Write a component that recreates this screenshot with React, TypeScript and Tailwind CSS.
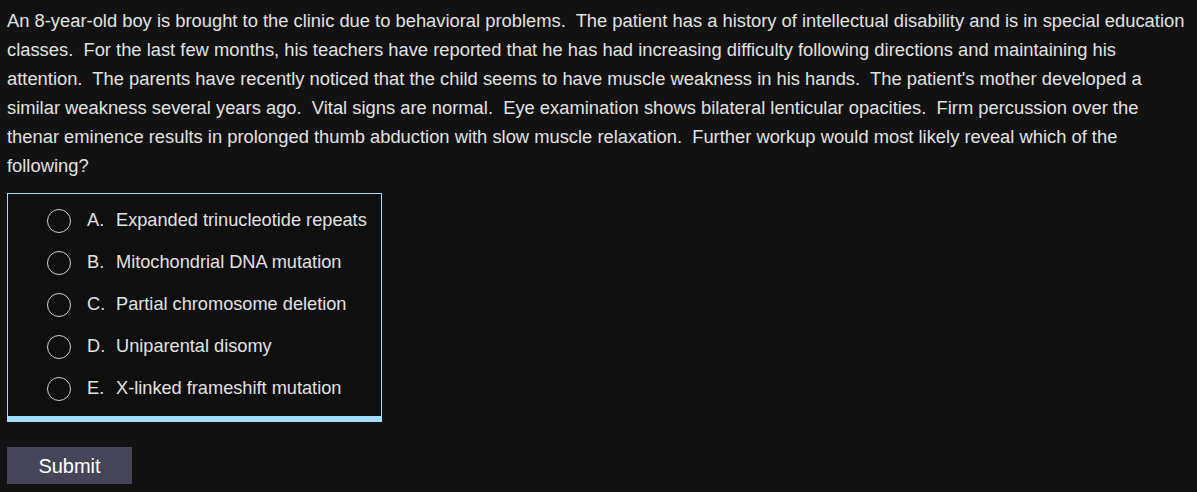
import { useState } from "react";

const options = [
  { key: "A", text: "Expanded trinucleotide repeats" },
  { key: "B", text: "Mitochondrial DNA mutation" },
  { key: "C", text: "Partial chromosome deletion" },
  { key: "D", text: "Uniparental disomy" },
  { key: "E", text: "X-linked frameshift mutation" },
];

export default function App() {
  const [selected, setSelected] = useState<string | null>(null);

  return (
    <div className="min-h-[492px] bg-[#121212] px-[7px] pt-[6px] font-['Liberation_Sans',Arial,sans-serif] text-[#e1e1e1]">
      <p className="text-[18.35px] leading-[29px]">
        An 8-year-old boy is brought to the clinic due to behavioral problems.&nbsp; The patient has a history of
        intellectual disability and is in special education classes.&nbsp; For the last few months, his teachers have
        reported that he has had increasing difficulty following directions and maintaining his attention.&nbsp; The
        parents have recently noticed that the child seems to have muscle weakness in his hands.&nbsp; The patient's
        mother developed a similar weakness several years ago.&nbsp; Vital signs are normal.&nbsp; Eye examination shows
        bilateral lenticular opacities.&nbsp; Firm percussion over the thenar eminence results in prolonged thumb
        abduction with slow muscle relaxation.&nbsp; Further workup would most likely reveal which of the following?
      </p>

      <div className="mt-[13px] w-[375px] border border-b-0 border-[#a6d8f2] bg-[#0f0f0f]">
        <div className="py-[6px]">
          {options.map((o) => (
            <label
              key={o.key}
              onClick={() => setSelected(o.key)}
              className="flex h-[42px] cursor-pointer items-center pl-[39px] text-[18.2px]"
            >
              <span className="flex h-[24px] w-[24px] shrink-0 items-center justify-center rounded-full border-[1.5px] border-[#d0d0d0]">
                {selected === o.key && <span className="h-[12px] w-[12px] rounded-full bg-[#d6d6d6]" />}
              </span>
              <span className="ml-[16px] w-[29px] shrink-0">{o.key}.</span>
              <span className="whitespace-nowrap">{o.text}</span>
            </label>
          ))}
        </div>
        <div className="-mx-px h-[6px] bg-[#a3dcfd]" />
      </div>

      <button className="mt-[25px] h-[37px] w-[125px] bg-[#464557] text-[20px] text-white">Submit</button>
    </div>
  );
}
